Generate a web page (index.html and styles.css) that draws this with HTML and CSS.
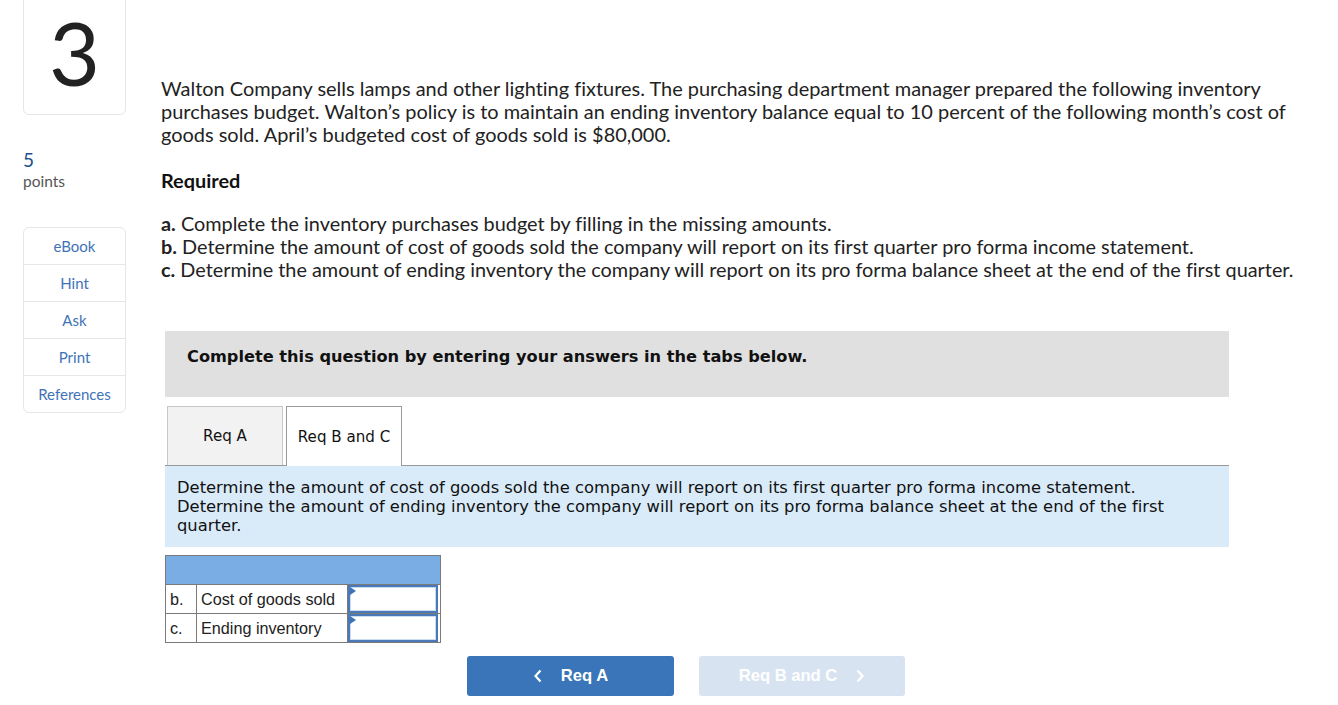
FILE: index.html
```html
<!DOCTYPE html>
<html>
<head>
<meta charset="utf-8">
<link rel="stylesheet" href="styles.css">
</head>
<body>
<div class="page">
  <aside class="side">
    <div class="qnum">3</div>
    <div class="points">
      <div class="pts-num">5</div>
      <div class="pts-label">points</div>
    </div>
    <nav class="tools">
      <div class="tool">eBook</div>
      <div class="tool">Hint</div>
      <div class="tool">Ask</div>
      <div class="tool">Print</div>
      <div class="tool">References</div>
    </nav>
  </aside>
  <main class="main">
    <p class="intro">Walton Company sells lamps and other lighting fixtures. The purchasing department manager prepared the following inventory purchases budget. Walton’s policy is to maintain an ending inventory balance equal to 10 percent of the following month’s cost of goods sold. April’s budgeted cost of goods sold is $80,000.</p>
    <p class="required">Required</p>
    <ul class="reqs">
      <li><b>a.</b> Complete the inventory purchases budget by filling in the missing amounts.</li>
      <li><b>b.</b> Determine the amount of cost of goods sold the company will report on its first quarter pro forma income statement.</li>
      <li><b>c.</b> Determine the amount of ending inventory the company will report on its pro forma balance sheet at the end of the first quarter.</li>
    </ul>
    <section class="work">
      <div class="banner">Complete this question by entering your answers in the tabs below.</div>
      <div class="tabs">
        <div class="tab">Req A</div>
        <div class="tab active">Req B and C</div>
      </div>
      <div class="instr">
        <div>Determine the amount of cost of goods sold the company will report on its first quarter pro forma income statement.</div>
        <div>Determine the amount of ending inventory the company will report on its pro forma balance sheet at the end of the first quarter.</div>
      </div>
      <table class="answers">
        <tr class="head"><td colspan="3"></td></tr>
        <tr>
          <td class="c1">b.</td>
          <td class="c2">Cost of goods sold</td>
          <td class="c3"><div class="inp"></div></td>
        </tr>
        <tr>
          <td class="c1">c.</td>
          <td class="c2">Ending inventory</td>
          <td class="c3"><div class="inp"></div></td>
        </tr>
      </table>
      <div class="navbtns">
        <div class="btn prev">
          <svg width="10" height="14" viewBox="0 0 10 14"><path d="M7.5 1.5 L2.5 7 L7.5 12.5" fill="none" stroke="#fff" stroke-width="2.2"/></svg>
          <span>Req A</span>
        </div>
        <div class="btn next">
          <span>Req B and C</span>
          <svg width="10" height="14" viewBox="0 0 10 14"><path d="M2.5 1.5 L7.5 7 L2.5 12.5" fill="none" stroke="#fff" stroke-width="2.2"/></svg>
        </div>
      </div>
    </section>
  </main>
</div>
</body>
</html>
```

FILE: styles.css
```css
html, body {
  margin: 0;
  padding: 0;
  background: #fff;
}

.page {
  display: flex;
  align-items: flex-start;
  font-family: Lato, "Open Sans", sans-serif;
  font-variant-ligatures: none;
  color: #222;
}

.side {
  width: 103px;
  margin-left: 23px;
  display: flex;
  flex-direction: column;
}

.qnum {
  margin-top: -6px;
  height: 121px;
  box-sizing: border-box;
  border: 1px solid #e6e6e6;
  border-radius: 6px;
  display: flex;
  align-items: center;
  justify-content: center;
  font-size: 88px;
  font-weight: 400;
  color: #222;
  line-height: 1;
  padding-bottom: 6px;
}

.points {
  margin-top: 34px;
}

.pts-num {
  font-size: 19px;
  line-height: 22px;
  color: #1d4f8c;
}

.pts-label {
  font-size: 15.5px;
  line-height: 21px;
  color: #555;
}

.tools {
  margin-top: 35px;
  border: 1px solid #e6e6e6;
  border-radius: 6px;
}

.tool {
  height: 36px;
  display: flex;
  align-items: center;
  justify-content: center;
  font-size: 15px;
  color: #3f73b8;
  border-top: 1px solid #e6e6e6;
}

.tool:first-child {
  border-top: none;
}

.main {
  margin-left: 35px;
  width: 1140px;
  padding-top: 77px;
}

.intro {
  margin: 0;
  font-size: 19.95px;
  line-height: 23px;
  color: #222;
}

.required {
  margin: 23px 0 0;
  font-size: 19.9px;
  line-height: 23px;
  font-weight: 700;
  color: #111;
}

.reqs {
  list-style: none;
  margin: 20px 0 0;
  padding: 0;
  font-size: 19.85px;
  line-height: 23px;
}

.reqs b {
  font-weight: 700;
}

.work {
  margin: 50px 0 0 4px;
  width: 1064px;
  font-family: "DejaVu Sans", Verdana, sans-serif;
}

.banner {
  background: #e0e0e0;
  height: 66px;
  box-sizing: border-box;
  padding: 17px 22px 0;
  font-size: 16.2px;
  line-height: 18px;
  font-weight: 700;
  color: #111;
}

.tabs {
  margin-top: 9px;
  display: flex;
  gap: 3px;
  padding-left: 2px;
  border-bottom: 1px solid #999;
  height: 59px;
}

.tab {
  width: 116px;
  box-sizing: border-box;
  height: 59px;
  display: flex;
  align-items: center;
  justify-content: center;
  font-size: 15.1px;
  color: #111;
  background: #f2f2f2;
  border: 1px solid #c8c8c8;
  border-bottom: none;
}

.tab.active {
  background: #fff;
  border-color: #999;
  height: 60px;
}

.instr {
  background: #d9ebf9;
  height: 81px;
  box-sizing: border-box;
  padding: 12px 12px 0;
  font-size: 16.35px;
  line-height: 19px;
  color: #111;
}

.instr div {
  max-width: 1000px;
}

.answers {
  margin-top: 8px;
  border-collapse: collapse;
  font-family: "Liberation Sans", Arial, sans-serif;
  font-size: 16.2px;
  color: #222;
  width: 276px;
  border: 1px solid #7a7a7a;
}

.answers td {
  border: 1px solid #7a7a7a;
  height: 28px;
  padding: 0;
}

.answers .head td {
  background: #7aade4;
}

.answers .c1 {
  width: 31px;
  padding-left: 4px;
  box-sizing: border-box;
}

.answers .c2 {
  width: 151px;
  padding-left: 4px;
  box-sizing: border-box;
}

.answers .c3 {
  width: 92px;
  position: relative;
}

.inp {
  position: absolute;
  left: 0;
  top: 0;
  right: 2px;
  bottom: 0;
  border: 2px solid #4a79b7;
  box-shadow: inset 0 0 0 1px #c9dcf1;
  background: #fff;
}

.inp::before {
  content: "";
  position: absolute;
  left: 0;
  top: 0;
  border-left: 6px solid #3f73b8;
  border-top: 4px solid transparent;
  border-bottom: 4px solid transparent;
}

.navbtns {
  display: flex;
  gap: 25px;
  margin: 13px 0 0 302px;
}

.btn {
  width: 207px;
  height: 40px;
  border-radius: 3px;
  display: flex;
  align-items: center;
  justify-content: center;
  gap: 18px;
  font-family: "Liberation Sans", Arial, sans-serif;
  font-weight: 700;
  font-size: 16.6px;
  color: #fff;
}

.btn.prev {
  background: #3a75b9;
}

.btn.next {
  background: #d8e3f1;
  width: 206px;
}
```
